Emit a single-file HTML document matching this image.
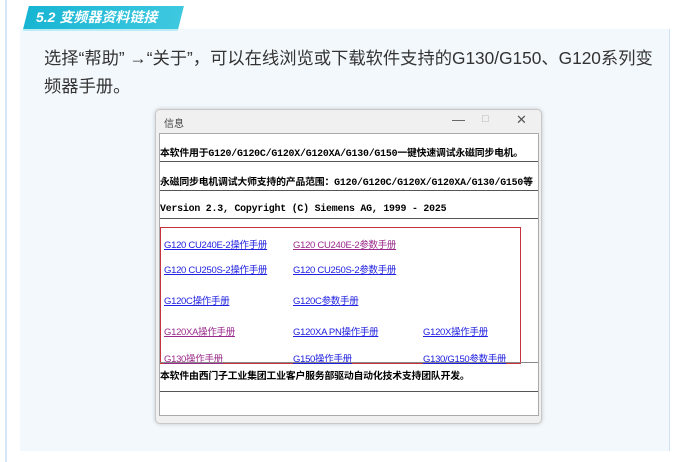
<!DOCTYPE html>
<html><head><meta charset="utf-8"><style>
*{margin:0;padding:0;box-sizing:border-box}
body{width:677px;height:462px;background:#fff;position:relative;overflow:hidden;font-family:"Liberation Sans","Noto Sans CJK SC",sans-serif}
.vline{position:absolute;left:5px;top:0;width:2px;height:462px;background:#d4e6f7}
.panel{position:absolute;left:20px;top:29px;width:650px;height:422px;background:#f3f8fc;border-right:1px solid #cfe2f5}
.tag{position:absolute;left:26px;top:6px;width:155px;height:23px;background:linear-gradient(90deg,#17b5d3,#3ec8e0);transform:skewX(-14deg);box-shadow:0 2px 0 #b9ecf3}
.tagt{position:absolute;left:36px;top:7px;color:#fff;font-style:italic;font-weight:bold;font-size:14px;line-height:20px}
.p{position:absolute;left:44px;top:44px;width:616px;font-size:17.3px;line-height:28px;color:#333}
.dlg{position:absolute;left:155px;top:109px;width:387px;height:315px;background:#f0f0f0;border:1px solid #c8c8c8;border-radius:5px;box-shadow:0 0 4px rgba(0,0,0,.2)}
.tt{position:absolute;left:8px;top:5px;font-size:10px;color:#444}
.ctl{position:absolute;top:2px;font-size:13px;color:#555}
.inner{position:absolute;left:3px;top:23px;width:380px;height:283px;background:#fff;border:1px solid #aaa}
.mono{position:absolute;left:0px;font-family:"Liberation Mono","Noto Sans CJK SC",serif;font-weight:bold;font-size:9.9px;color:#000;white-space:nowrap;letter-spacing:-.2px}
.hl{position:absolute;left:0px;width:378px;height:1px;background:#555}
.box{position:absolute;left:0px;top:93px;width:361px;height:137px;border:1px solid #c8323c}
a{position:absolute;font-size:9.5px;color:#2020e0;text-decoration:underline;white-space:nowrap;letter-spacing:-.3px}
a.v{color:#9a2a8a}
</style></head><body>
<div class="vline"></div>
<div class="panel"></div>
<div class="tag"></div><div class="tagt">5.2 变频器资料链接</div>
<div class="p">选择“帮助” →“关于”，可以在线浏览或下载软件支持的G130/G150、G120系列变<br>频器手册。</div>
<div class="dlg">
 <div class="tt">信息</div>
 <div class="ctl" style="left:296px">—</div>
 <div class="ctl" style="left:326px;font-size:11px;top:3px;color:#aaa">□</div>
 <div class="ctl" style="left:360px">✕</div>
 <div class="inner">
  <div class="mono" style="top:11px">本软件用于G120/G120C/G120X/G120XA/G130/G150一键快速调试永磁同步电机。</div>
  <div class="hl" style="top:27px"></div>
  <div class="mono" style="top:40px">永磁同步电机调试大师支持的产品范围：G120/G120C/G120X/G120XA/G130/G150等</div>
  <div class="hl" style="top:56px"></div>
  <div class="mono" style="top:69px">Version 2.3,  Copyright (C) Siemens AG, 1999 - 2025</div>
  <div class="hl" style="top:84px"></div>
  <div class="box"></div>
  <a style="left:4px;top:103px">G120 CU240E-2操作手册</a>
  <a class="v" style="left:133px;top:103px">G120 CU240E-2参数手册</a>
  <a style="left:4px;top:128px">G120 CU250S-2操作手册</a>
  <a style="left:133px;top:128px">G120 CU250S-2参数手册</a>
  <a style="left:4px;top:159px">G120C操作手册</a>
  <a style="left:133px;top:159px">G120C参数手册</a>
  <a class="v" style="left:4px;top:190px">G120XA操作手册</a>
  <a style="left:133px;top:190px">G120XA PN操作手册</a>
  <a style="left:263px;top:190px">G120X操作手册</a>
  <a class="v" style="left:4px;top:217px">G130操作手册</a>
  <a style="left:133px;top:217px">G150操作手册</a>
  <a style="left:263px;top:217px">G130/G150参数手册</a>
  <div class="hl" style="top:228px;background:#888"></div>
  <div class="mono" style="top:234px">本软件由西门子工业集团工业客户服务部驱动自动化技术支持团队开发。</div>
  <div class="hl" style="top:257px"></div>
 </div>
</div>
</body></html>
